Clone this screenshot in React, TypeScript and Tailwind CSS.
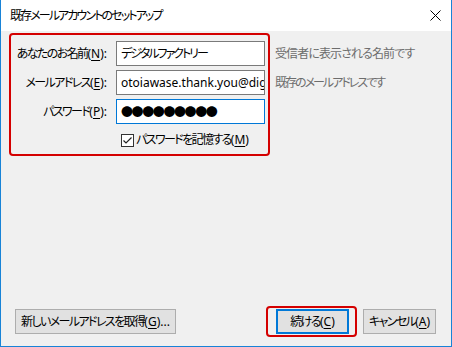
import React from 'react';

const font = "[font-family:'Noto_Sans','Noto_Sans_CJK_JP',sans-serif] [font-feature-settings:'palt']";

// Japanese runs are set tighter so the widths follow the narrow system UI font
const J: React.FC<{ t?: string; children: React.ReactNode }> = ({ t = 'tracking-[-1.6px]', children }) => (
    <span className={t}>{children}</span>
);

const Key: React.FC<{ k: string }> = ({ k }) => <span className="underline underline-offset-2">{k}</span>;

const Field: React.FC<{ focused?: boolean; children: React.ReactNode }> = ({ focused, children }) => (
    <div
        className={`h-[25px] w-[149px] overflow-hidden whitespace-nowrap bg-white pl-[4px] flex items-center text-[12px] text-black border ${focused ? 'border-[#0078d7]' : 'border-[#7a7a7a]'}`}
    >
        {children}
    </div>
);

const Btn: React.FC<{ className?: string; children: React.ReactNode }> = ({ className = '', children }) => (
    <button
        className={`h-[25px] bg-[#e1e1e1] text-[12px] text-black flex items-center justify-center whitespace-nowrap ${className}`}
    >
        {children}
    </button>
);

const App: React.FC = () => {
    const rows = [
        { label: 'あなたのお名前', k: 'N', value: <J t="tracking-[-2px]">デジタルファクトリー</J> },
        {
            label: 'メールアドレス',
            k: 'E',
            value: <span className="[font-feature-settings:normal]">otoiawase.thank.you@digital</span>,
        },
        {
            label: 'パスワード',
            k: 'P',
            focused: true,
            value: (
                <span className="text-[12px] tracking-[-1.4px] [font-family:'Noto_Sans_CJK_JP',sans-serif] [font-feature-settings:normal]">
                    ●●●●●●●●●
                </span>
            ),
        },
    ];

    return (
        <div className={`w-[452px] h-[347px] flex flex-col border-x border-b border-[#1883d7] bg-[#f0f0f0] ${font}`}>
            {/* Title bar */}
            <div className="h-[31px] bg-white flex items-center justify-between pl-[9px] pr-[10px] shrink-0">
                <span className="text-[12px] text-black">
                    <J t="tracking-[-1.9px]">既存メールアカウントのセットアップ</J>
                </span>
                <svg width="11" height="11" viewBox="0 0 11 11">
                    <path d="M0.5 0.5L10.5 10.5M10.5 0.5L0.5 10.5" stroke="#000" strokeWidth="1" />
                </svg>
            </div>

            {/* Body */}
            <div className="flex-1 flex flex-col">
                <div className="flex items-start">
                    <div className="ml-[8px] mt-[2px] w-[261px] h-[123px] border-2 border-[#d40000] rounded-[4px] pt-[6px] flex flex-col gap-[4px]">
                        {rows.map((row) => (
                            <div key={row.k} className="flex items-center">
                                <div className="w-[96px] text-right text-[12px] text-black whitespace-nowrap">
                                    <J>{row.label}</J>(<Key k={row.k} />):
                                </div>
                                <div className="ml-[9px]">
                                    <Field focused={row.focused}>{row.value}</Field>
                                </div>
                            </div>
                        ))}
                        <div className="flex items-center ml-[110px] mt-[3px]">
                            <div className="w-[13px] h-[13px] border border-[#333] bg-white flex items-center justify-center">
                                <svg width="11" height="11" viewBox="0 0 11 11">
                                    <path d="M1.5 5.5L4 8L9.5 2.5" stroke="#222" strokeWidth="1.2" fill="none" />
                                </svg>
                            </div>
                            <span className="ml-[2px] text-[12px] text-black whitespace-nowrap">
                                <J>パスワードを記憶する</J>(<Key k="M" />)
                            </span>
                        </div>
                    </div>
                    <div className="ml-[5px] pt-[10px] flex flex-col gap-[4px] text-[12px] text-[#6d6d6d]">
                        <div className="h-[25px] flex items-center whitespace-nowrap">
                            <J t="tracking-[-0.9px]">受信者に表示される名前です</J>
                        </div>
                        <div className="h-[25px] flex items-center whitespace-nowrap">
                            <J t="tracking-[-2px]">既存のメールアドレスです</J>
                        </div>
                    </div>
                </div>

                {/* Buttons */}
                <div className="mt-auto flex items-center pl-[14px] pr-[15px] pb-[9px]">
                    <Btn className="w-[161px] border border-[#adadad]">
                        <J>新しいメールアドレスを取得</J>(<Key k="G" />)...
                    </Btn>
                    <div className="ml-auto border-2 border-[#d40000] rounded-[4px] pl-[8px] pr-[6px] py-[1px]">
                        <Btn className="w-[73px] border-2 border-[#0078d7]">
                            <J>続ける</J>(<Key k="C" />)
                        </Btn>
                    </div>
                    <Btn className="ml-[6px] w-[73px] border border-[#adadad]">
                        <J>キャンセル</J>(<Key k="A" />)
                    </Btn>
                </div>
            </div>
        </div>
    );
};

export default App;
